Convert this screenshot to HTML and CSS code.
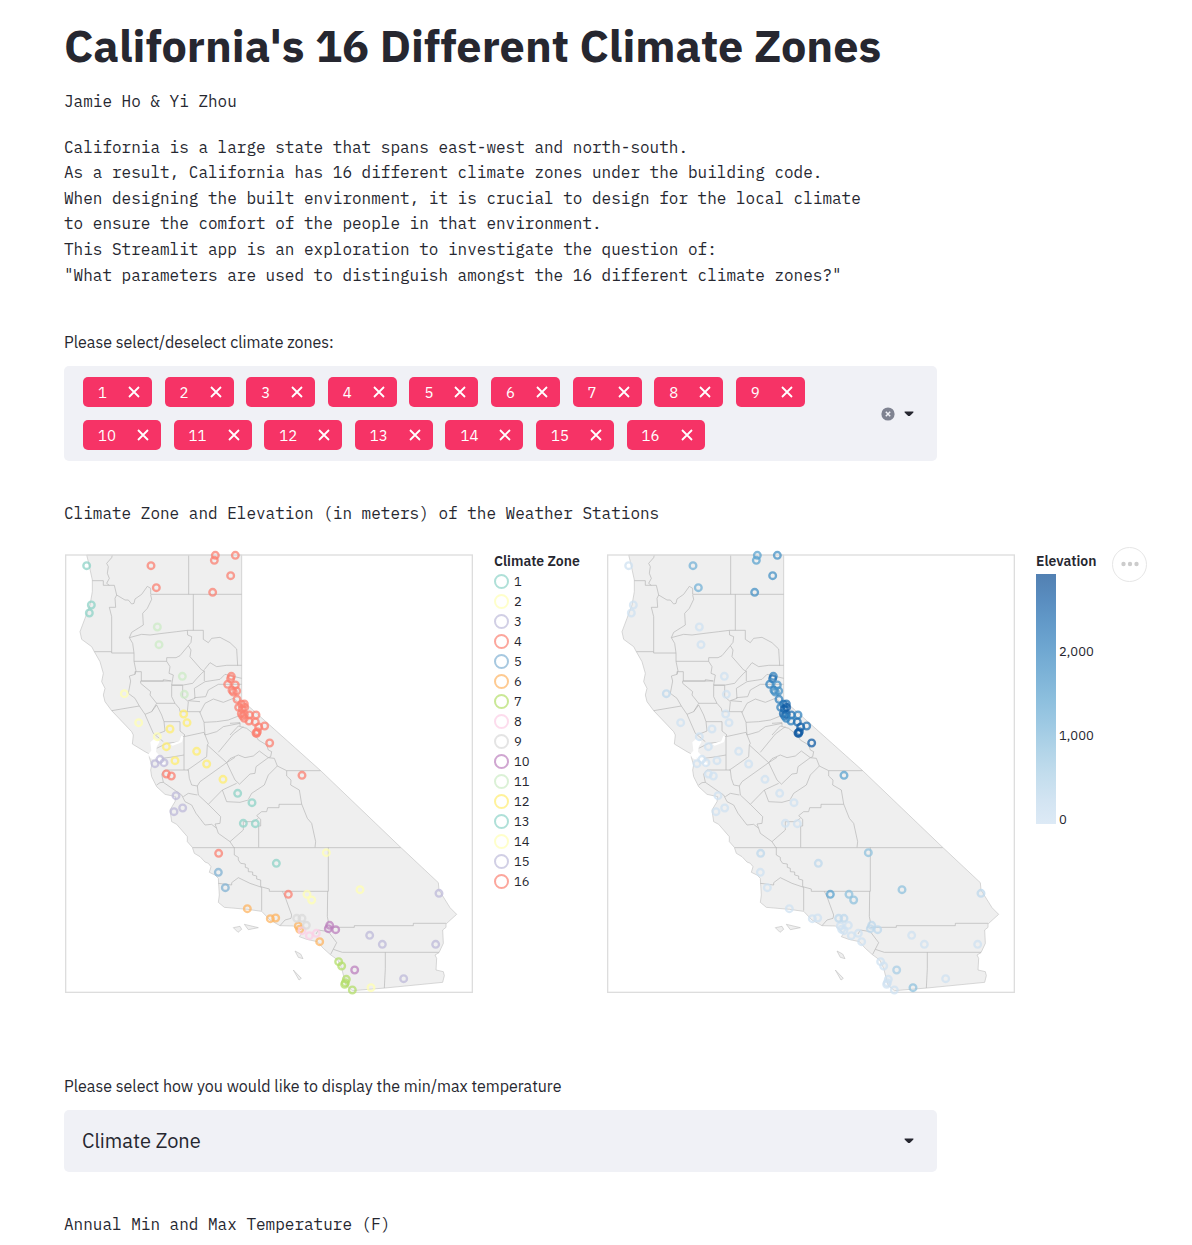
FILE: index.html
```html
<!DOCTYPE html>
<html lang="en">
<head>
<meta charset="utf-8">
<meta name="viewport" content="width=device-width, initial-scale=1">
<title>California's 16 Different Climate Zones</title>
<link rel="stylesheet" href="styles.css">
</head>
<body>
<main class="page">
  <h1 class="title">California's 16 Different Climate Zones</h1>
  <p class="mono byline">Jamie Ho &amp; Yi Zhou</p>
  <p class="mono intro">California is a large state that spans east-west and north-south.<br>
As a result, California has 16 different climate zones under the building code.<br>
When designing the built environment, it is crucial to design for the local climate<br>
to ensure the comfort of the people in that environment.<br>
This Streamlit app is an exploration to investigate the question of:<br>
"What parameters are used to distinguish amongst the 16 different climate zones?"</p>

  <div class="field" role="group" aria-labelledby="zones-label">
    <span class="label" id="zones-label">Please select/deselect climate zones:</span>
    <div class="multi">
      <ul class="tags" id="tags"></ul>
      <div class="multi-actions">
        <button class="icon-button" type="button" aria-label="Clear all">
          <svg width="14" height="14" viewBox="0 0 14 14"><circle cx="7" cy="7" r="6.6" fill="#7f8391"/><path d="M4.8 4.8l4.4 4.4M9.2 4.8L4.8 9.2" stroke="#f0f1f6" stroke-width="1.5"/></svg>
        </button>
        <button class="icon-button" type="button" aria-label="Open">
          <svg width="10" height="6" viewBox="0 0 10 6"><path d="M.6.6h8.8v.8L5.8 5H4.2L.6 1.400z" fill="#262730"/></svg>
        </button>
      </div>
    </div>
  </div>

  <p class="mono chart-title">Climate Zone and Elevation (in meters) of the Weather Stations</p>

  <div class="chart">
    <svg class="map" viewBox="15 27 1224 1320" role="img" aria-label="Weather stations by climate zone">
      <defs>
        <g id="california">
          <path class="state" d="M80 30H545V465L782 677 1022 907 1135 1013 1137 1035 1170 1088 1190 1108 1158 1137 1158 1147 1148 1155 1150 1195 1137 1223 1125 1230 1130 1240 1128 1275 1150 1280 1153 1292 1148 1312 975 1329 877 1337 858 1320 850 1290 845 1270 833 1245 810 1228 790 1210 772 1190 740 1183 718 1175 725 1165 700 1143 660 1142 630 1125 605 1099 562 1093 493 1087 475 1072 478 1050 475 1000 465 990 448 982 453 965 445 955 435 951 420 935 403 925 397 907 382 890 382 875 350 838 335 830 330 795 345 770 347 755 315 748 290 725 275 695 272 675 275 660 268 637 268 627 255 620 217 597 220 570 215 560 155 497 135 470 130 450 135 430 125 410 130 385 120 350 103 320 95 305 65 283 60 260 75 220 90 180 97 140 97 105 85 50Z"/>
          <g class="county">
            <path d="M157 30L155 38 140 55 145 65 142 85 148 100 140 115 148 121M97 107H130V121H163L170 150 165 160 167 187H148L155 215V320M103 320H155V324H222"/>
            <path d="M170 150L195 165H205L215 177 222 175 225 162 245 148 262 124 272 130V148H545M386 30V148M400 148V256"/>
            <path d="M272 150L275 163 262 190 248 205 250 240 215 262 208 278 245 268 270 270 300 266 350 260 382 256H430V283L445 293 455 280 480 277 510 293 530 312 533 362"/>
            <path d="M208 278L218 295 222 324V349L228 378 225 388M222 349H320M382 256L383 270 395 275 393 292 385 302 360 332 348 338H320V349L330 365 327 385 340 390 335 420"/>
            <path d="M385 302L393 315 390 335 425 375 433 378M433 374L450 353 470 365 500 361H545M225 388V380H244V408H310V404L335 408M225 388L208 393 212 408M335 420H370L398 415 408 403 425 385 433 378V408"/>
          </g>
          <g class="county" transform="translate(0 375)">
            <path d="M212 33L205 70 225 85 238 108 155 122M238 108L255 133 275 125 290 100 270 75 272 65 242 40V33H333M290 100H345L335 80 335 46M345 100L358 115 360 125H420V128L432 157"/>
            <path d="M275 125L290 105 305 135 312 155H360V183L375 195 365 205M255 133L280 190 310 215M335 46H368V80L385 95 382 125M385 92L405 85 403 55 435 35 480 28 495 13 545 25M403 83L437 80 445 60 475 43H545M385 92L420 95M420 128L435 100 460 87 490 97 520 85 530 92"/>
            <path d="M432 157L470 155 505 150 538 137M432 157L435 195 470 185 490 170 540 160M372 200L432 187 445 220 442 225 500 278M475 247L520 192 550 170M312 155L315 183 285 195M372 200V300M290 235L320 220 365 215M372 255L330 262 305 265M442 225L440 260 390 295 382 300"/>
            <path d="M315 300H385L388 325 395 345 412 348M412 348L415 375 445 403 487 360 530 340M412 348L420 335 500 278 525 330 538 342M500 278L525 262M487 360L500 395 540 397 565 390M412 375L385 370 370 380M290 345L300 338 310 337 365 375 375 395 395 405 408 430 435 465 455 463 470 475 465 462 480 460 482 440 445 403M315 300L305 312 310 337"/>
            <path d="M470 475L475 490 510 515 522 533M510 515L550 480V455H580L595 445M398 533H1022"/>
          </g>
          <g class="county" transform="translate(510 345)">
            <path d="M-10 308L0 296 25 285 45 293 70 288 88 273 115 293 133 295 142 318 170 332H272M115 293L78 320 75 340 60 342 28 373M142 318L115 345 103 375 65 400 55 418"/>
            <path d="M170 332V348L183 360 182 375 208 390 215 432 232 475 245 490 257 545 255 562M80 467L95 455H110L113 443H147V433H215M80 467L92 478V498H86V562M0 225L25 198 50 205 75 225 85 240 110 255 115 270 125 275 122 290 115 293M0 190L30 188V198"/>
          </g>
          <g class="county" transform="translate(510 885)">
            <path d="M13 22V45L25 52V60L32 70 46 72V82L55 85V95L68 96V105L80 108V117L92 120V140L118 147V154H295V22M-35 130L5 135V128L25 113 60 130 95 142V212M157 154L165 170 185 225 183 235 165 240 150 257M293 154L292 230 295 245 285 265"/>
            <path d="M295 262H373V257H550V250H648M258 282L265 270 295 275 320 308 302 343M310 328L337 337H627M466 337V385L463 444"/>
          </g>
          <path class="state" d="M520 1148L540 1144 545 1153 534 1162ZM553 1138L595 1148 565 1154ZM705 1218L722 1227 729 1241 715 1237ZM700 1275L724 1300 717 1305Z"/>
          <path class="water" d="M264 628L274 617 271 592 284 580 299 590 290 605 288 620 302 636 317 658 310 665 292 645 284 636 284 645 272 640ZM330 597L358 588 364 572 370 575 366 592 338 602Z"/>
        </g>
      </defs>
      <use href="#california"/>
      <rect class="frame" x="17" y="30" width="1220" height="1312"/>
      <g class="stations" id="zone-stations"></g>
    </svg>

    <section class="legend zones">
      <h2 class="legend-title">Climate Zone</h2>
      <ul class="legend-list" id="legend"></ul>
    </section>

    <svg class="map" viewBox="15 27 1224 1320" role="img" aria-label="Weather stations by elevation">
      <use href="#california"/>
      <rect class="frame" x="17" y="30" width="1220" height="1312"/>
      <g class="stations" id="elevation-stations"></g>
    </svg>

    <section class="legend">
      <h2 class="legend-title">Elevation</h2>
      <div class="scale">
        <div class="ramp"></div>
        <div class="ticks"><span>2,000</span><span>1,000</span><span>0</span></div>
      </div>
    </section>

    <button class="menu" type="button" aria-label="Chart actions">
      <svg width="18" height="6" viewBox="0 0 18 6" fill="#ccc"><circle cx="2.500" cy="3" r="2.200"/><circle cx="9" cy="3" r="2.200"/><circle cx="15.500" cy="3" r="2.200"/></svg>
    </button>
  </div>

  <div class="field display-field">
    <label class="label" for="display">Please select how you would like to display the min/max temperature</label>
    <div class="select-box">
      <select id="display" class="select"><option>Climate Zone</option></select>
      <svg class="caret" width="10" height="6" viewBox="0 0 10 6"><path d="M.6.6h8.8v.8L5.800 5H4.200L.6 1.400z" fill="#262730"/></svg>
    </div>
  </div>

  <p class="mono last-title">Annual Min and Max Temperature (F)</p>
</main>
<script src="app.js"></script>
</body>
</html>
```
FILE: styles.css
```css
* { box-sizing: border-box; }

body {
  margin: 0;
  background: #fff;
  color: #262730;
  font-family: "IBM Plex Sans", Roboto, "Noto Sans", sans-serif;
  font-size: 16px;
}

h1, h2, p, ul { margin: 0; padding: 0; }
ul { list-style: none; }
button { border: 0; padding: 0; background: none; color: inherit; font: inherit; cursor: pointer; }
svg { display: block; }

.page { padding: 15px 40px 8px 64px; }

.title { font-size: 45px; line-height: 60px; font-weight: 700; }

.mono {
  font-family: "IBM Plex Mono", "Liberation Mono", monospace;
  font-size: 16px;
  line-height: 1.6;
}
.byline { margin-top: 14px; }
.intro { margin-top: 20px; }

.field { max-width: 873px; margin-top: 41px; }
.label { display: block; line-height: 26px; }

.multi {
  display: flex;
  align-items: center;
  justify-content: space-between;
  margin-top: 11px;
  padding: 11px 23px 11px 19px;
  border-radius: 5px;
  background: #f0f1f6;
}
.tags { display: flex; flex: 0 1 740px; flex-wrap: wrap; gap: 13px 1.7%; }
.tag {
  display: flex;
  align-items: center;
  gap: 21px;
  height: 30px;
  padding: 0 12px 0 15px;
  border-radius: 5px;
  background: #f63366;
  color: #fff;
  font-size: 15px;
}
.multi-actions { display: flex; align-items: center; gap: 9px; }
.icon-button { display: block; }

.chart-title { margin-top: 40px; }

.chart {
  display: grid;
  grid-template-columns: minmax(0, 408px) 92px minmax(0, 408px) 55px 35px;
  column-gap: 21px;
  align-items: start;
  margin: 20px 0 0 1px;
  padding-top: 7px;
}
.map { width: 100%; height: auto; overflow: visible; }
.frame { fill: none; stroke: #ddd; stroke-width: 4; }
.state { fill: #efefef; stroke: #c4c4c4; stroke-width: 2; }
.county { fill: none; stroke: #b4b4b4; stroke-width: 2; }
.water { fill: #fff; }
.stations { fill: none; stroke-width: 7; stroke-opacity: .75; }

.legend { font-size: 13px; white-space: nowrap; }
.legend-title { font-size: 14px; line-height: 14px; font-weight: 600; }
.legend-list li { display: flex; align-items: center; gap: 5px; height: 20px; }
.zones .legend-title { margin-bottom: 4px; }
.swatch { width: 15px; height: 15px; border: 2px solid; border-radius: 50%; opacity: .7; }

.scale { display: flex; gap: 3px; height: 250px; margin-top: 6px; }
.ramp {
  flex: none;
  width: 20px;
  opacity: .7;
  background: linear-gradient(to top, #cfe1f2, #bed8ec, #a8cee5, #8fc1de, #74b2d7, #5ba3cf, #4592c6, #3181bd, #206fb2, #125ca4, #084a91);
}
.ticks { display: flex; flex-direction: column; gap: 68px; padding-top: 70px; line-height: 16px; }

.menu {
  display: grid;
  place-items: center;
  width: 35px;
  height: 35px;
  margin-top: -7px;
  border: 1px solid #e6e6e6;
  border-radius: 50%;
}

.display-field { margin-top: 79px; }
.select-box {
  display: grid;
  grid-template-columns: 1fr 23px;
  align-items: center;
  margin-top: 11px;
  border-radius: 5px;
  background: #f0f1f6;
}
.select {
  grid-area: 1 / 1 / 2 / 3;
  width: 100%;
  height: 62px;
  padding: 0 18px;
  border: 0;
  background: none;
  color: inherit;
  font: inherit;
  font-size: 20px;
  appearance: none;
}
.caret { grid-area: 1 / 2; justify-self: start; margin-left: -10px; pointer-events: none; }

.last-title { margin-top: 40px; }
```
FILE: app.js
```js
const zoneColors = ["#8dd3c7", "#ffffb3", "#bebada", "#fb8072", "#80b1d3", "#fdb462",
  "#b3de69", "#fccde5", "#d9d9d9", "#bc80bd", "#ccebc5", "#ffed6f"];
const blues = ["#cfe1f2", "#bed8ec", "#a8cee5", "#8fc1de", "#74b2d7", "#5ba3cf",
  "#4592c6", "#3181bd", "#206fb2", "#125ca4", "#084a91"];
const zoneColor = zone => zoneColors[(zone - 1) % 12];
const elevationColor = m => blues[Math.min(10, Math.round(m / 295))];

// [zone, [[x, y, elevation in meters], ...]]
const stations = [
  [1, [[80, 62, 20], [94, 180, 10], [88, 204, 60]]],
  [2, [[193, 446, 190], [236, 533, 40], [292, 575, 10]]],
  [3, [[285, 656, 5], [300, 643, 5], [312, 653, 15], [348, 752, 40], [368, 789, 25], [342, 800, 50]]],
  [4, [[319, 687, 10], [334, 693, 30], [476, 925, 240]]],
  [5, [[475, 982, 70], [496, 1028, 75]]],
  [6, [[562, 1091, 5], [631, 1121, 10], [647, 1119, 20], [715, 1143, 50], [719, 1153, 30], [779, 1190, 15]]],
  [7, [[836, 1250, 10], [845, 1263, 10], [859, 1303, 145], [854, 1318, 5], [856, 1313, 5], [877, 1335, 5]]],
  [8, [[726, 1157, 20], [748, 1172, 10], [769, 1165, 15]]],
  [9, [[710, 1120, 240], [726, 1120, 220], [739, 1141, 55]]],
  [10, [[809, 1141, 290], [805, 1151, 200], [827, 1154, 250], [884, 1275, 480]]],
  [11, [[292, 246, 100], [297, 299, 110], [367, 394, 60], [373, 448, 20]]],
  [12, [[371, 507, 10], [381, 533, 5], [330, 552, 30], [319, 605, 5], [345, 647, 120], [410, 619, 10], [440, 657, 20], [489, 703, 50]]],
  [13, [[533, 745, 70], [576, 773, 100], [550, 835, 75], [586, 836, 80], [649, 955, 150]]],
  [14, [[799, 923, 900], [900, 1034, 750], [741, 1048, 760], [755, 1065, 900], [933, 1328, 900]]],
  [15, [[1137, 1045, 280], [929, 1171, 130], [967, 1198, 10], [1127, 1198, 120], [1031, 1301, 10]]],
  [16, [[273, 62, 1080], [289, 128, 1200], [466, 31, 1500], [463, 46, 1480], [526, 31, 1900], [512, 92, 1800],
    [458, 142, 1800], [514, 394, 2100], [512, 401, 2500], [503, 418, 1950], [526, 420, 1900], [516, 436, 2200],
    [520, 441, 1900], [530, 438, 1900], [531, 463, 2100], [545, 478, 2300], [536, 487, 2100], [553, 477, 2400],
    [554, 487, 2750], [547, 492, 2600], [544, 506, 2500], [553, 508, 2750], [548, 513, 2400], [568, 510, 2500],
    [588, 510, 2150], [553, 520, 2200], [567, 528, 2150], [586, 531, 2300], [596, 546, 2800], [614, 543, 2300],
    [588, 564, 2900], [592, 560, 2700], [590, 565, 2800], [629, 594, 2600], [726, 691, 1480], [685, 1048, 1600]]]
];

function ring(x, y, color) {
  const c = document.createElementNS("http://www.w3.org/2000/svg", "circle");
  c.setAttribute("cx", x);
  c.setAttribute("cy", y);
  c.setAttribute("r", 10);
  c.setAttribute("stroke", color);
  return c;
}

const zoneLayer = document.getElementById("zone-stations");
const elevationLayer = document.getElementById("elevation-stations");
const legend = document.getElementById("legend");
const tags = document.getElementById("tags");

for (const [zone, points] of stations) {
  for (const [x, y, meters] of points) {
    zoneLayer.append(ring(x, y, zoneColor(zone)));
    elevationLayer.append(ring(x, y, elevationColor(meters)));
  }
  legend.insertAdjacentHTML("beforeend",
    `<li><span class="swatch" style="border-color:${zoneColor(zone)}"></span>${zone}</li>`);
  tags.insertAdjacentHTML("beforeend",
    `<li class="tag">${zone}<button class="icon-button" type="button" aria-label="Remove ${zone}">
      <svg width="12" height="12" viewBox="0 0 12 12"><path d="M1 1l10 10M11 1L1 11" stroke="#fff" stroke-width="1.800"/></svg></button></li>`);
}
```
